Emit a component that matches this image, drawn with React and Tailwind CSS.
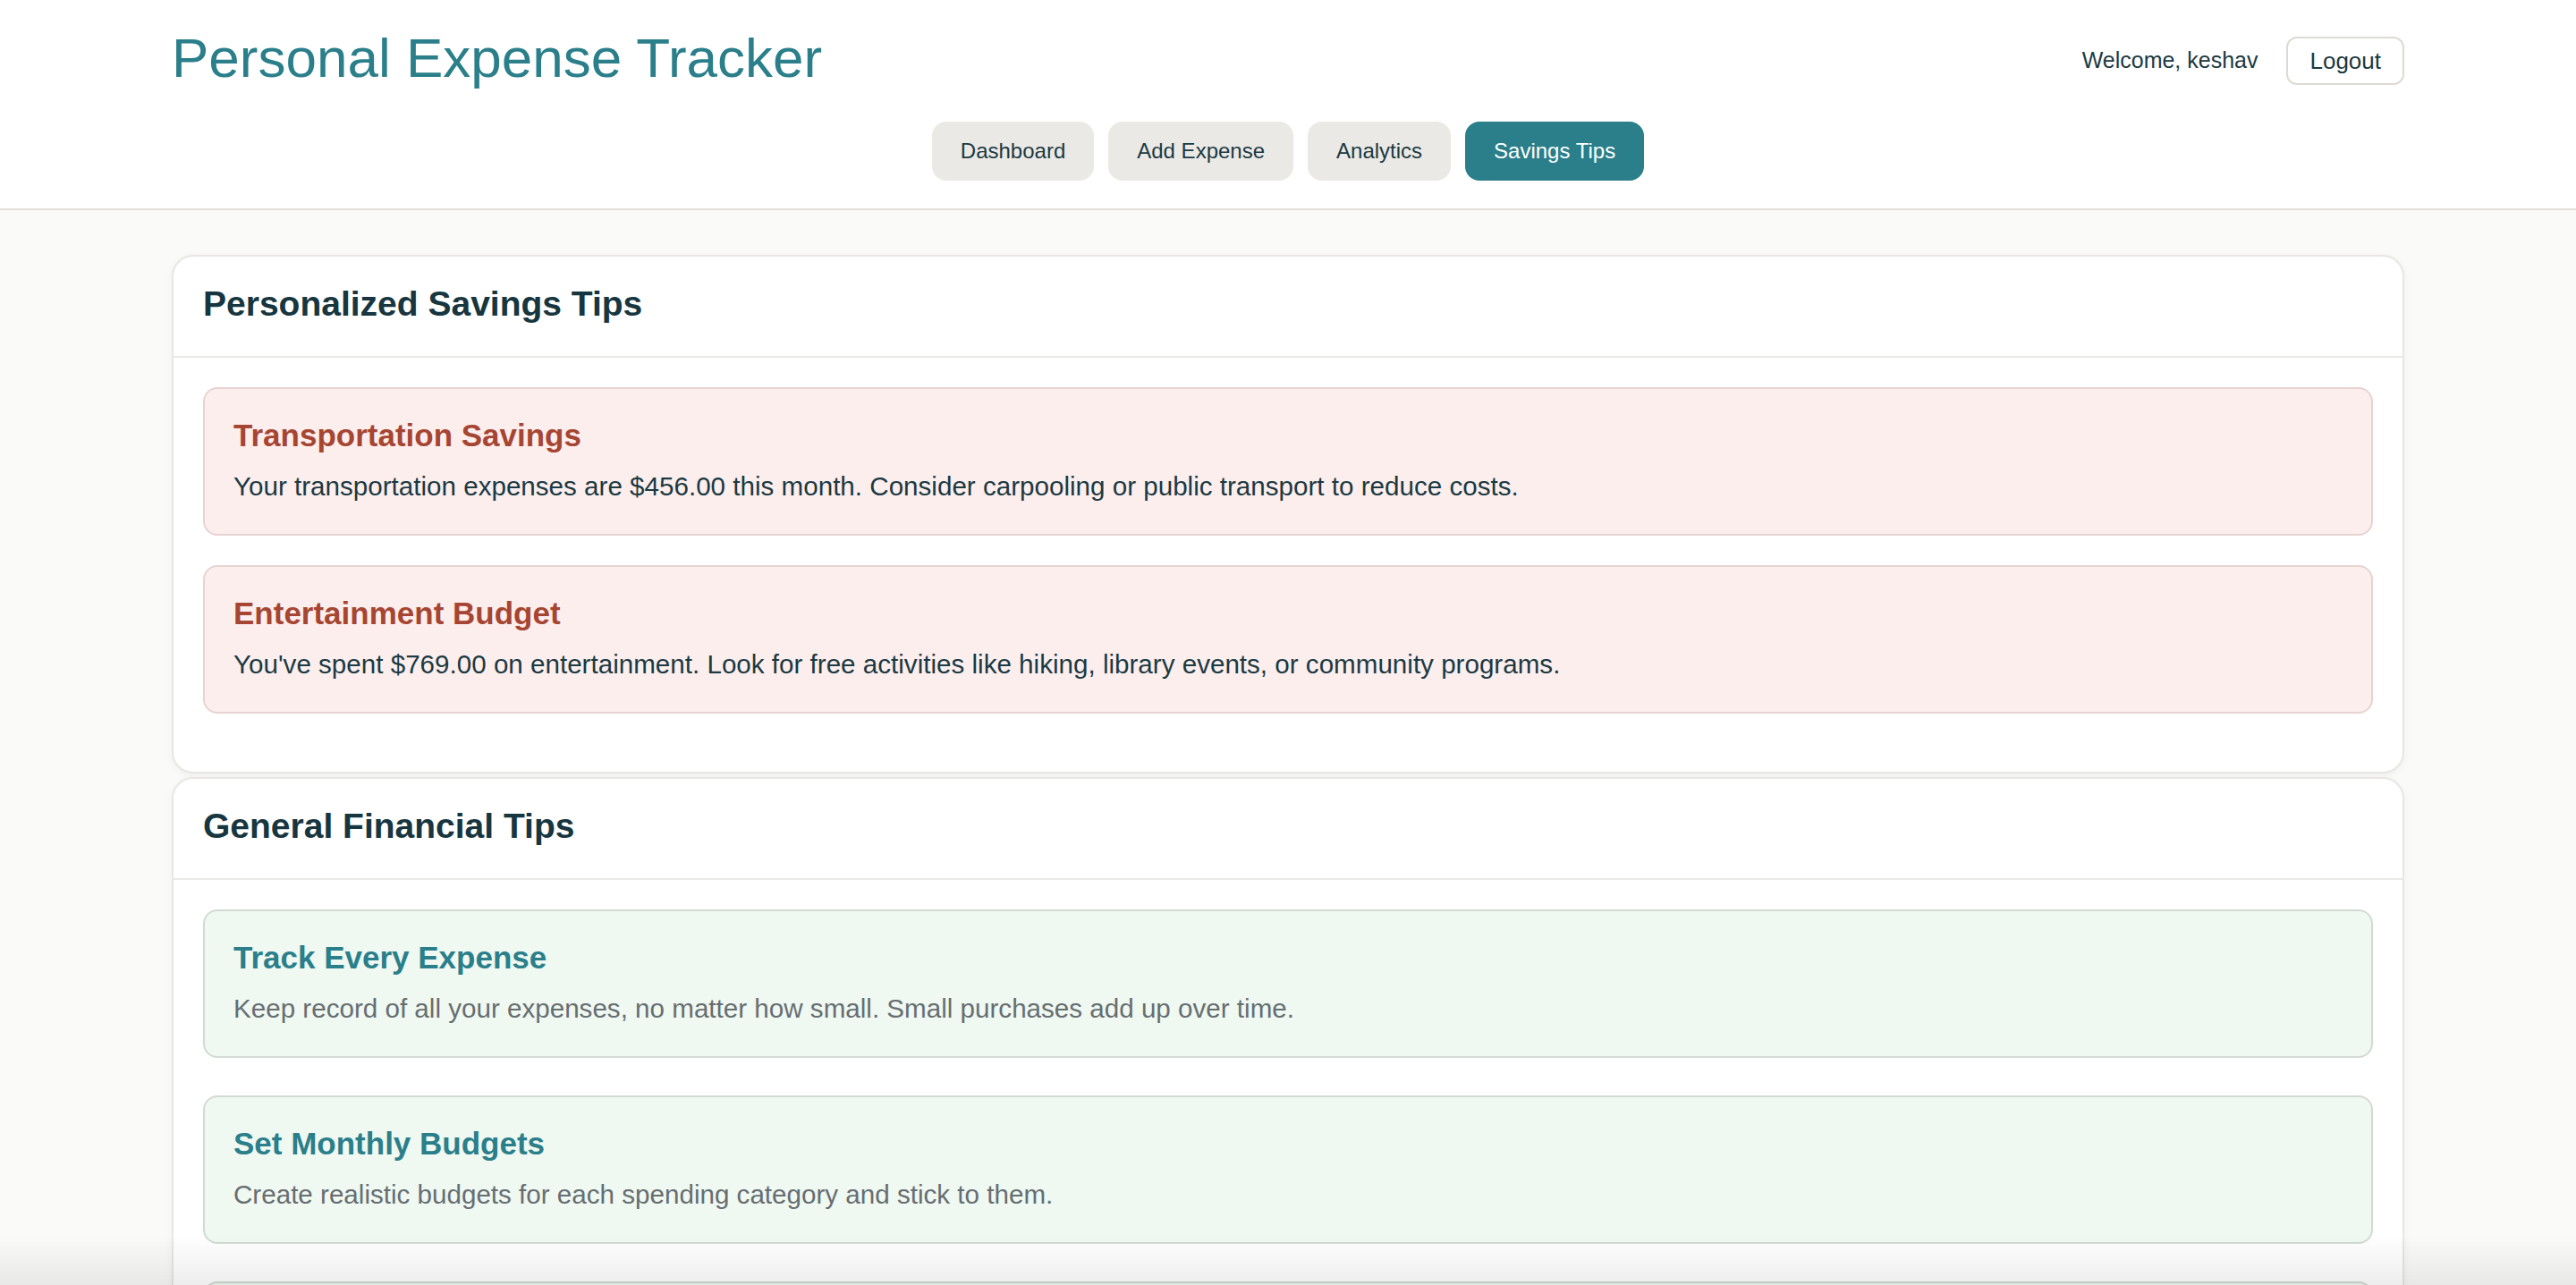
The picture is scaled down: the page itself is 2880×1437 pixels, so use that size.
import React from "react";

const personalTips = [
  {
    title: "Transportation Savings",
    text: "Your transportation expenses are $456.00 this month. Consider carpooling or public transport to reduce costs.",
  },
  {
    title: "Entertainment Budget",
    text: "You've spent $769.00 on entertainment. Look for free activities like hiking, library events, or community programs.",
  },
];

const generalTips = [
  {
    title: "Track Every Expense",
    text: "Keep record of all your expenses, no matter how small. Small purchases add up over time.",
  },
  {
    title: "Set Monthly Budgets",
    text: "Create realistic budgets for each spending category and stick to them.",
  },
  {
    title: "Build an Emergency Fund",
    text: "Aim to save 3-6 months of expenses for unexpected situations.",
  },
];

const navItems = ["Dashboard", "Add Expense", "Analytics", "Savings Tips"];

const Header = () => {
  return (
    <header className="bg-white border-b-2 border-[#e2dfda]">
      <div className="max-w-[2560px] mx-auto px-[32px] pt-[33px] pb-[31px]">
        {/* Titre + utilisateur */}
        <div className="flex items-center justify-between h-[64px]">
          <h1 className="text-[62px] leading-[64px] text-[#2a7f8a] font-normal">
            Personal Expense Tracker
          </h1>
          <div className="flex items-center gap-[32px] mt-[6px]">
            <span className="text-[25px] text-[#1b3a42]">Welcome, keshav</span>
            <button className="h-[54px] px-[24px] border-2 border-[#dedad4] rounded-[12px] bg-white text-[26px] text-[#1b3a42]">
              Logout
            </button>
          </div>
        </div>

        {/* Navigation */}
        <nav className="flex justify-center gap-[16px] mt-[39px]">
          {navItems.map((item) => (
            <button
              key={item}
              className={`h-[66px] px-[32px] rounded-[16px] text-[24px] flex items-center ${
                item === "Savings Tips"
                  ? "bg-[#2a7f8a] text-white"
                  : "bg-[#ebe9e6] text-[#1b3a42]"
              }`}
            >
              {item}
            </button>
          ))}
        </nav>
      </div>
    </header>
  );
};

const TipCard = ({ tip, variant }) => {
  const pink = variant === "pink";
  return (
    <div
      className={`border-2 rounded-[16px] px-[32px] pt-[32px] pb-[32px] ${
        pink
          ? "bg-[#fdeeee] border-[#e6d4d2] mb-[33px]"
          : "bg-[#eff8f1] border-[#d3dad3] mb-[42px]"
      }`}
    >
      <h3
        className={`text-[35px] leading-[40px] font-bold ${
          pink ? "text-[#a64632]" : "text-[#2a7f8a]"
        }`}
      >
        {tip.title}
      </h3>
      <p
        className={`mt-[16px] text-[29.6px] leading-[42px] ${
          pink ? "text-[#1b3a42]" : "text-[#676e71]"
        }`}
      >
        {tip.text}
      </p>
    </div>
  );
};

const Section = ({ title, tips, variant }) => {
  return (
    <section className="bg-white border-2 border-[#e9e7e4] rounded-[24px] shadow-[0_2px_8px_rgba(0,0,0,0.05)]">
      <div className="px-[33px] pt-[29px] pb-[34px] border-b-2 border-[#ebe9e6]">
        <h2 className="text-[39px] leading-[48px] font-bold text-[#173640]">{title}</h2>
      </div>
      <div className="px-[33px] pt-[33px] pb-[32px]">
        {tips.map((tip) => (
          <TipCard key={tip.title} tip={tip} variant={variant} />
        ))}
      </div>
    </section>
  );
};

export default function App() {
  return (
    <div className="min-h-screen bg-[#fafaf8] font-['Liberation_Sans',Arial,sans-serif]">
      <Header />
      <main className="max-w-[2560px] mx-auto px-[32px] pt-[50px] pb-[64px] flex flex-col gap-[4px]">
        <Section title="Personalized Savings Tips" tips={personalTips} variant="pink" />
        <Section title="General Financial Tips" tips={generalTips} variant="green" />
      </main>
      {/* ombre du bas de la fenêtre */}
      <div className="fixed inset-x-0 bottom-0 h-[56px] pointer-events-none bg-gradient-to-b from-transparent to-black/[0.07]"></div>
    </div>
  );
}
